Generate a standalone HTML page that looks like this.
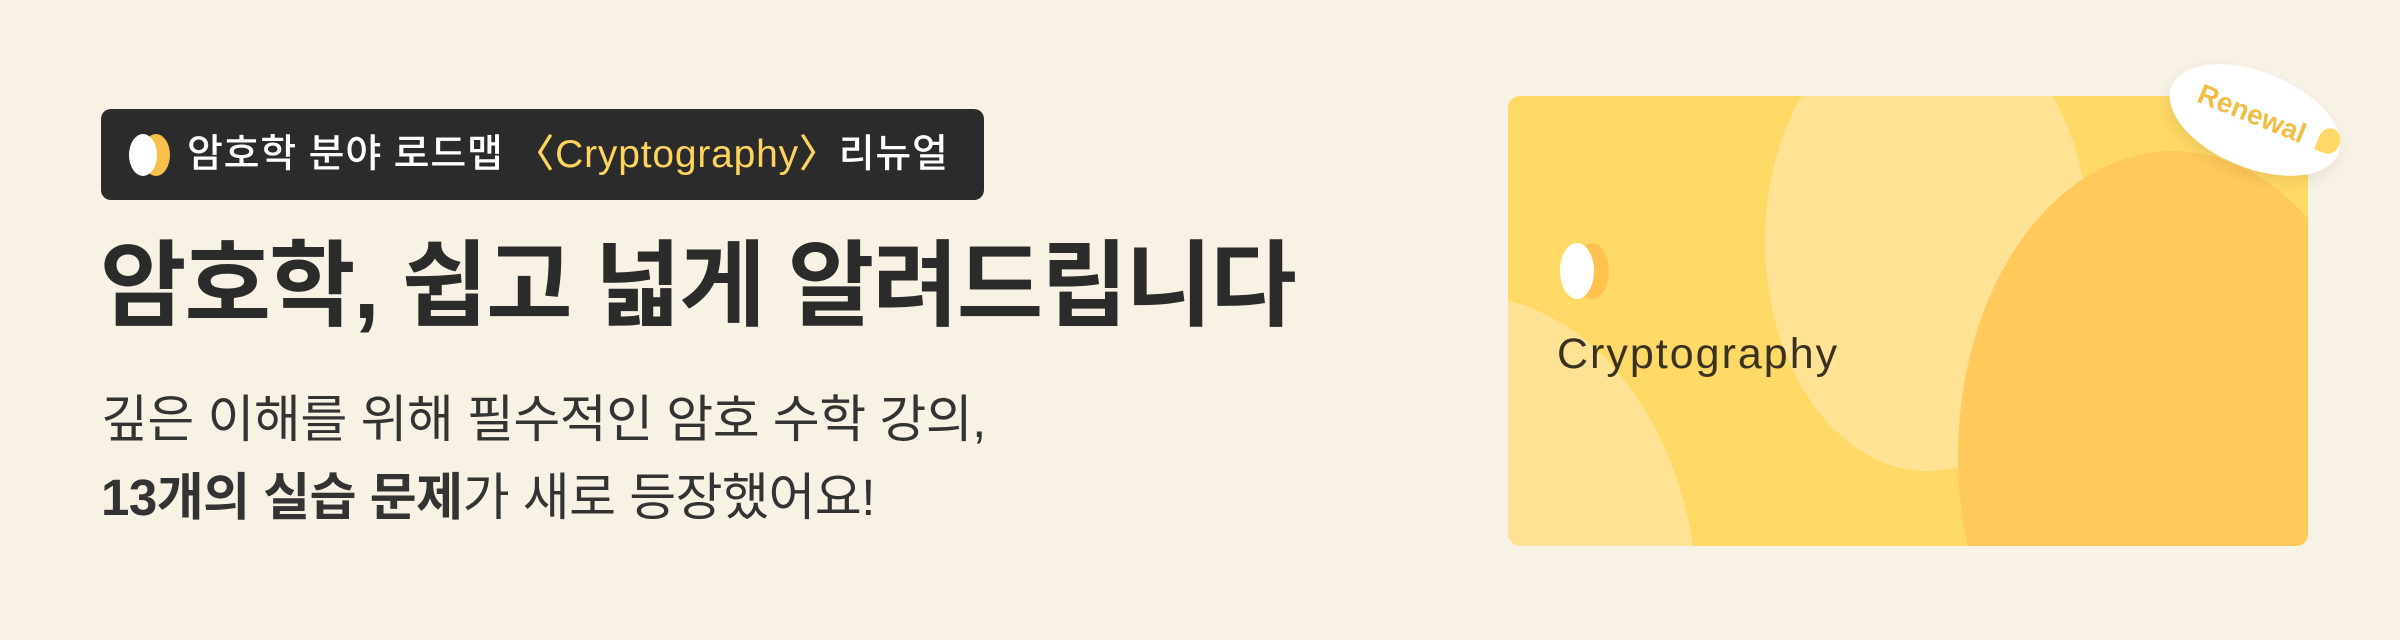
<!DOCTYPE html>
<html><head><meta charset="utf-8"><style>
html,body{margin:0;padding:0;overflow:hidden;width:2400px;height:640px}
body{background:#f8f2e4;position:relative;font-family:"Liberation Sans","Noto Sans CJK KR",sans-serif;color:#2b2b2b}
.badge{position:absolute;left:101px;top:109px;width:883px;height:91px;background:#2b2b2b;border-radius:10px}
.badge .t{position:absolute;left:86px;top:0;line-height:91px;font-size:39px;color:#fff;font-weight:500;letter-spacing:0.8px;white-space:nowrap}
.badge .y{color:#ffd45c}
.h1{position:absolute;left:100px;top:232px;font-size:94px;font-weight:700;letter-spacing:-2px;white-space:nowrap;line-height:1.15}
.sub{position:absolute;left:101px;top:381px;font-size:51px;line-height:78px;letter-spacing:-0.5px;white-space:nowrap;color:#333}
.card{position:absolute;left:1508px;top:96px;width:800px;height:450px;border-radius:12px;overflow:hidden;background:#ffd966}
.ct{position:absolute;left:49px;top:234px;font-size:43px;color:#3a3220;letter-spacing:2px}
</style></head><body>
<div class="badge">
<svg style="position:absolute;left:26px;top:24px" width="56" height="44" viewBox="0 0 56 44"><ellipse cx="29" cy="22" rx="14" ry="21" fill="#f8c04a"/><ellipse cx="16" cy="22" rx="14" ry="21" fill="#fff"/></svg>
<div class="t">암호학 분야 로드맵 <span class="y">〈Cryptography〉</span>리뉴얼</div>
</div>
<div class="h1">암호학, 쉽고 넓게 알려드립니다</div>
<div class="sub">깊은 이해를 위해 필수적인 암호 수학 강의,<br><b>13개의 실습 문제</b>가 새로 등장했어요!</div>
<div class="card">
<svg width="800" height="450" style="position:absolute;left:0;top:0">
<ellipse cx="419" cy="145" rx="162" ry="230" fill="#ffe293"/>
<ellipse cx="665" cy="360" rx="215" ry="305" fill="#ffc95b"/>
<ellipse cx="-39" cy="520" rx="230" ry="320" fill="#ffe293"/>
</svg>
<svg style="position:absolute;left:48px;top:144px" width="66" height="64" viewBox="0 0 66 64"><ellipse cx="36" cy="31" rx="17" ry="28" fill="#ffc24f"/><ellipse cx="21" cy="31" rx="17" ry="28" fill="#fff"/></svg>
<div class="ct">Cryptography</div>
</div>
<div style="position:absolute;left:2165px;top:72px;width:180px;height:96px;border-radius:50%;background:#fff;transform:rotate(22deg);box-shadow:0 6px 14px rgba(0,0,0,0.08)"></div>
<div style="position:absolute;left:2195px;top:98px;font-size:28px;color:#f0bd45;transform:rotate(22deg);font-weight:700">Renewal</div>
<div style="position:absolute;left:2318px;top:128px;width:22px;height:26px;background:#ffd966;border-radius:50% 50% 50% 0;transform:rotate(20deg)"></div>
</body></html>
